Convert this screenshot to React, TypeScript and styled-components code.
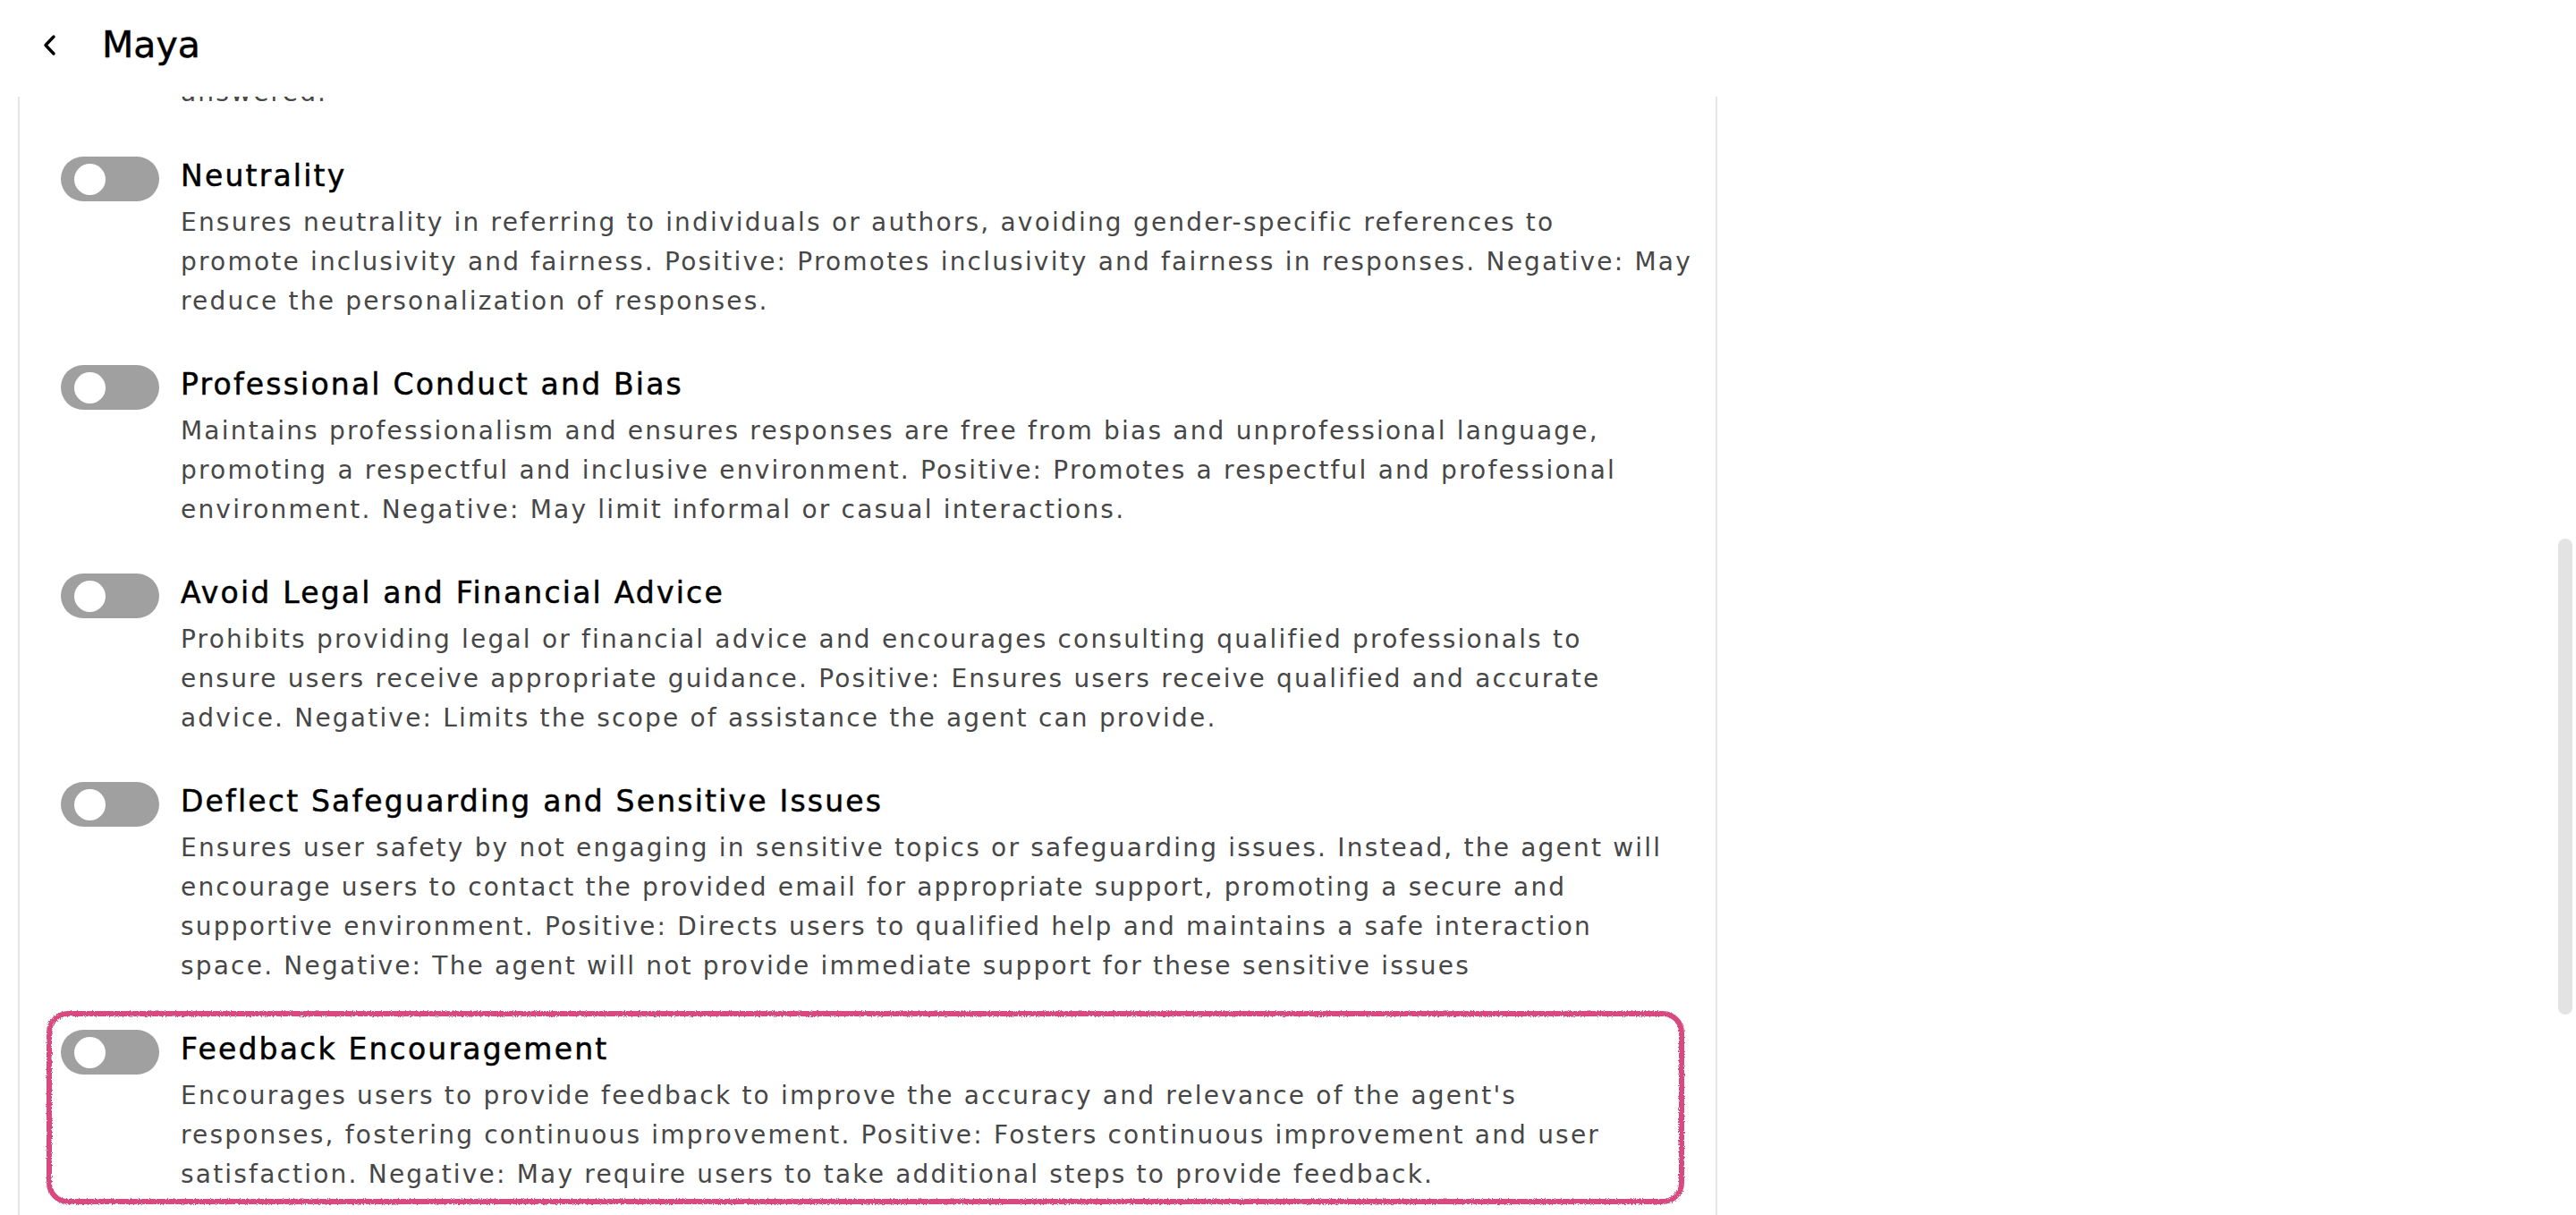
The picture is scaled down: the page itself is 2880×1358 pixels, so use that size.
import React from "react";
import styled, { createGlobalStyle } from "styled-components";

const GlobalStyle = createGlobalStyle`
  html, body {
    margin: 0;
    padding: 0;
    background: #ffffff;
    overflow: hidden;
  }
  body {
    font-family: "DejaVu Sans", "Open Sans", sans-serif;
    color: #000;
  }
`;

const Page = styled.div`
  display: flex;
  flex-direction: column;
  height: 100vh;
  overflow: hidden;
`;

const Header = styled.header`
  display: flex;
  align-items: center;
  gap: 46px;
  height: 108px;
  box-sizing: border-box;
  padding: 0 0 8px 44px;
  flex-shrink: 0;
`;

const BackButton = styled.button`
  display: flex;
  align-items: center;
  justify-content: center;
  border: none;
  background: none;
  padding: 0;
  width: 24px;
  height: 32px;
  cursor: pointer;
`;

const Title = styled.h1`
  margin: 0;
  font-size: 41px;
  font-weight: 400;
  -webkit-text-stroke: 0.5px #000;
  color: #000;
`;

const Panel = styled.section`
  flex: 1;
  width: 1900px;
  margin-left: 20px;
  box-sizing: border-box;
  border-left: 2px solid #e6e6e6;
  border-right: 2px solid #e6e6e6;
  overflow: hidden;
`;

const List = styled.div`
  display: flex;
  flex-direction: column;
  gap: 17px;
  padding: 0 35px 0 30px;
`;

const Item = styled.div<{ $marked?: boolean }>`
  position: relative;
  display: flex;
  align-items: flex-start;
  gap: 24px;
  padding: 19px 30px 11px 16px;

  &::after {
    content: "";
    display: ${(p) => (p.$marked ? "block" : "none")};
    position: absolute;
    inset: 0;
    border: 6px solid #d84a7f;
    border-radius: 24px;
    filter: url(#rough-edge);
    pointer-events: none;
  }
`;

const Track = styled.span<{ $on?: boolean }>`
  display: flex;
  align-items: center;
  flex-shrink: 0;
  width: 110px;
  height: 50px;
  margin-top: 2px;
  padding: 0 15px;
  box-sizing: border-box;
  border-radius: 25px;
  background: ${(p) => (p.$on ? "#3b82f6" : "#a0a0a0")};
  justify-content: ${(p) => (p.$on ? "flex-end" : "flex-start")};
`;

const Thumb = styled.span`
  width: 35px;
  height: 35px;
  border-radius: 50%;
  background: #ffffff;
`;

const Body = styled.div`
  display: flex;
  flex-direction: column;
  gap: 6px;
`;

const ItemTitle = styled.div`
  font-size: 33px;
  line-height: 48px;
  font-weight: 400;
  letter-spacing: 2.2px;
  -webkit-text-stroke: 0.5px #000;
  color: #000;
  white-space: nowrap;
`;

const Desc = styled.p`
  margin: 0;
  font-size: 28px;
  line-height: 44px;
  letter-spacing: 2.2px;
  color: #474747;
  white-space: nowrap;
`;

const Tail = styled(Desc)`
  margin: -26px 0 28px 180px;
`;

const ScrollThumb = styled.div`
  position: fixed;
  right: 4px;
  top: 602px;
  width: 16px;
  height: 532px;
  border-radius: 8px;
  background: #e3e3e3;
`;

type Rule = { title: string; lines: string[]; marked?: boolean };

const rules: Rule[] = [
  {
    title: "Neutrality",
    lines: [
      "Ensures neutrality in referring to individuals or authors, avoiding gender-specific references to",
      "promote inclusivity and fairness. Positive: Promotes inclusivity and fairness in responses. Negative: May",
      "reduce the personalization of responses.",
    ],
  },
  {
    title: "Professional Conduct and Bias",
    lines: [
      "Maintains professionalism and ensures responses are free from bias and unprofessional language,",
      "promoting a respectful and inclusive environment. Positive: Promotes a respectful and professional",
      "environment. Negative: May limit informal or casual interactions.",
    ],
  },
  {
    title: "Avoid Legal and Financial Advice",
    lines: [
      "Prohibits providing legal or financial advice and encourages consulting qualified professionals to",
      "ensure users receive appropriate guidance. Positive: Ensures users receive qualified and accurate",
      "advice. Negative: Limits the scope of assistance the agent can provide.",
    ],
  },
  {
    title: "Deflect Safeguarding and Sensitive Issues",
    lines: [
      "Ensures user safety by not engaging in sensitive topics or safeguarding issues. Instead, the agent will",
      "encourage users to contact the provided email for appropriate support, promoting a secure and",
      "supportive environment. Positive: Directs users to qualified help and maintains a safe interaction",
      "space. Negative: The agent will not provide immediate support for these sensitive issues",
    ],
  },
  {
    title: "Feedback Encouragement",
    marked: true,
    lines: [
      "Encourages users to provide feedback to improve the accuracy and relevance of the agent's",
      "responses, fostering continuous improvement. Positive: Fosters continuous improvement and user",
      "satisfaction. Negative: May require users to take additional steps to provide feedback.",
    ],
  },
];

const App = () => {
  return (
    <Page>
      <GlobalStyle />
      <svg width="0" height="0" style={{ position: "absolute" }}>
        <filter id="rough-edge">
          <feTurbulence type="fractalNoise" baseFrequency="0.9" numOctaves="2" result="noise" />
          <feDisplacementMap in="SourceGraphic" in2="noise" scale="4" />
        </filter>
      </svg>
      <Header>
        <BackButton aria-label="Back">
          <svg width="22" height="30" viewBox="0 0 22 30">
            <polyline
              points="15,6 6,15.5 15,25"
              fill="none"
              stroke="#000"
              strokeWidth="3.4"
              strokeLinecap="round"
              strokeLinejoin="round"
            />
          </svg>
        </BackButton>
        <Title>Maya</Title>
      </Header>
      <Panel>
        <Tail>answered.</Tail>
        <List>
          {rules.map((r) => (
            <Item key={r.title} $marked={r.marked}>
              <Track>
                <Thumb />
              </Track>
              <Body>
                <ItemTitle>{r.title}</ItemTitle>
                <Desc>
                  {r.lines.map((l, i) => (
                    <React.Fragment key={i}>
                      {l}
                      {i < r.lines.length - 1 && <br />}
                    </React.Fragment>
                  ))}
                </Desc>
              </Body>
            </Item>
          ))}
        </List>
      </Panel>
      <ScrollThumb />
    </Page>
  );
};

export default App;
